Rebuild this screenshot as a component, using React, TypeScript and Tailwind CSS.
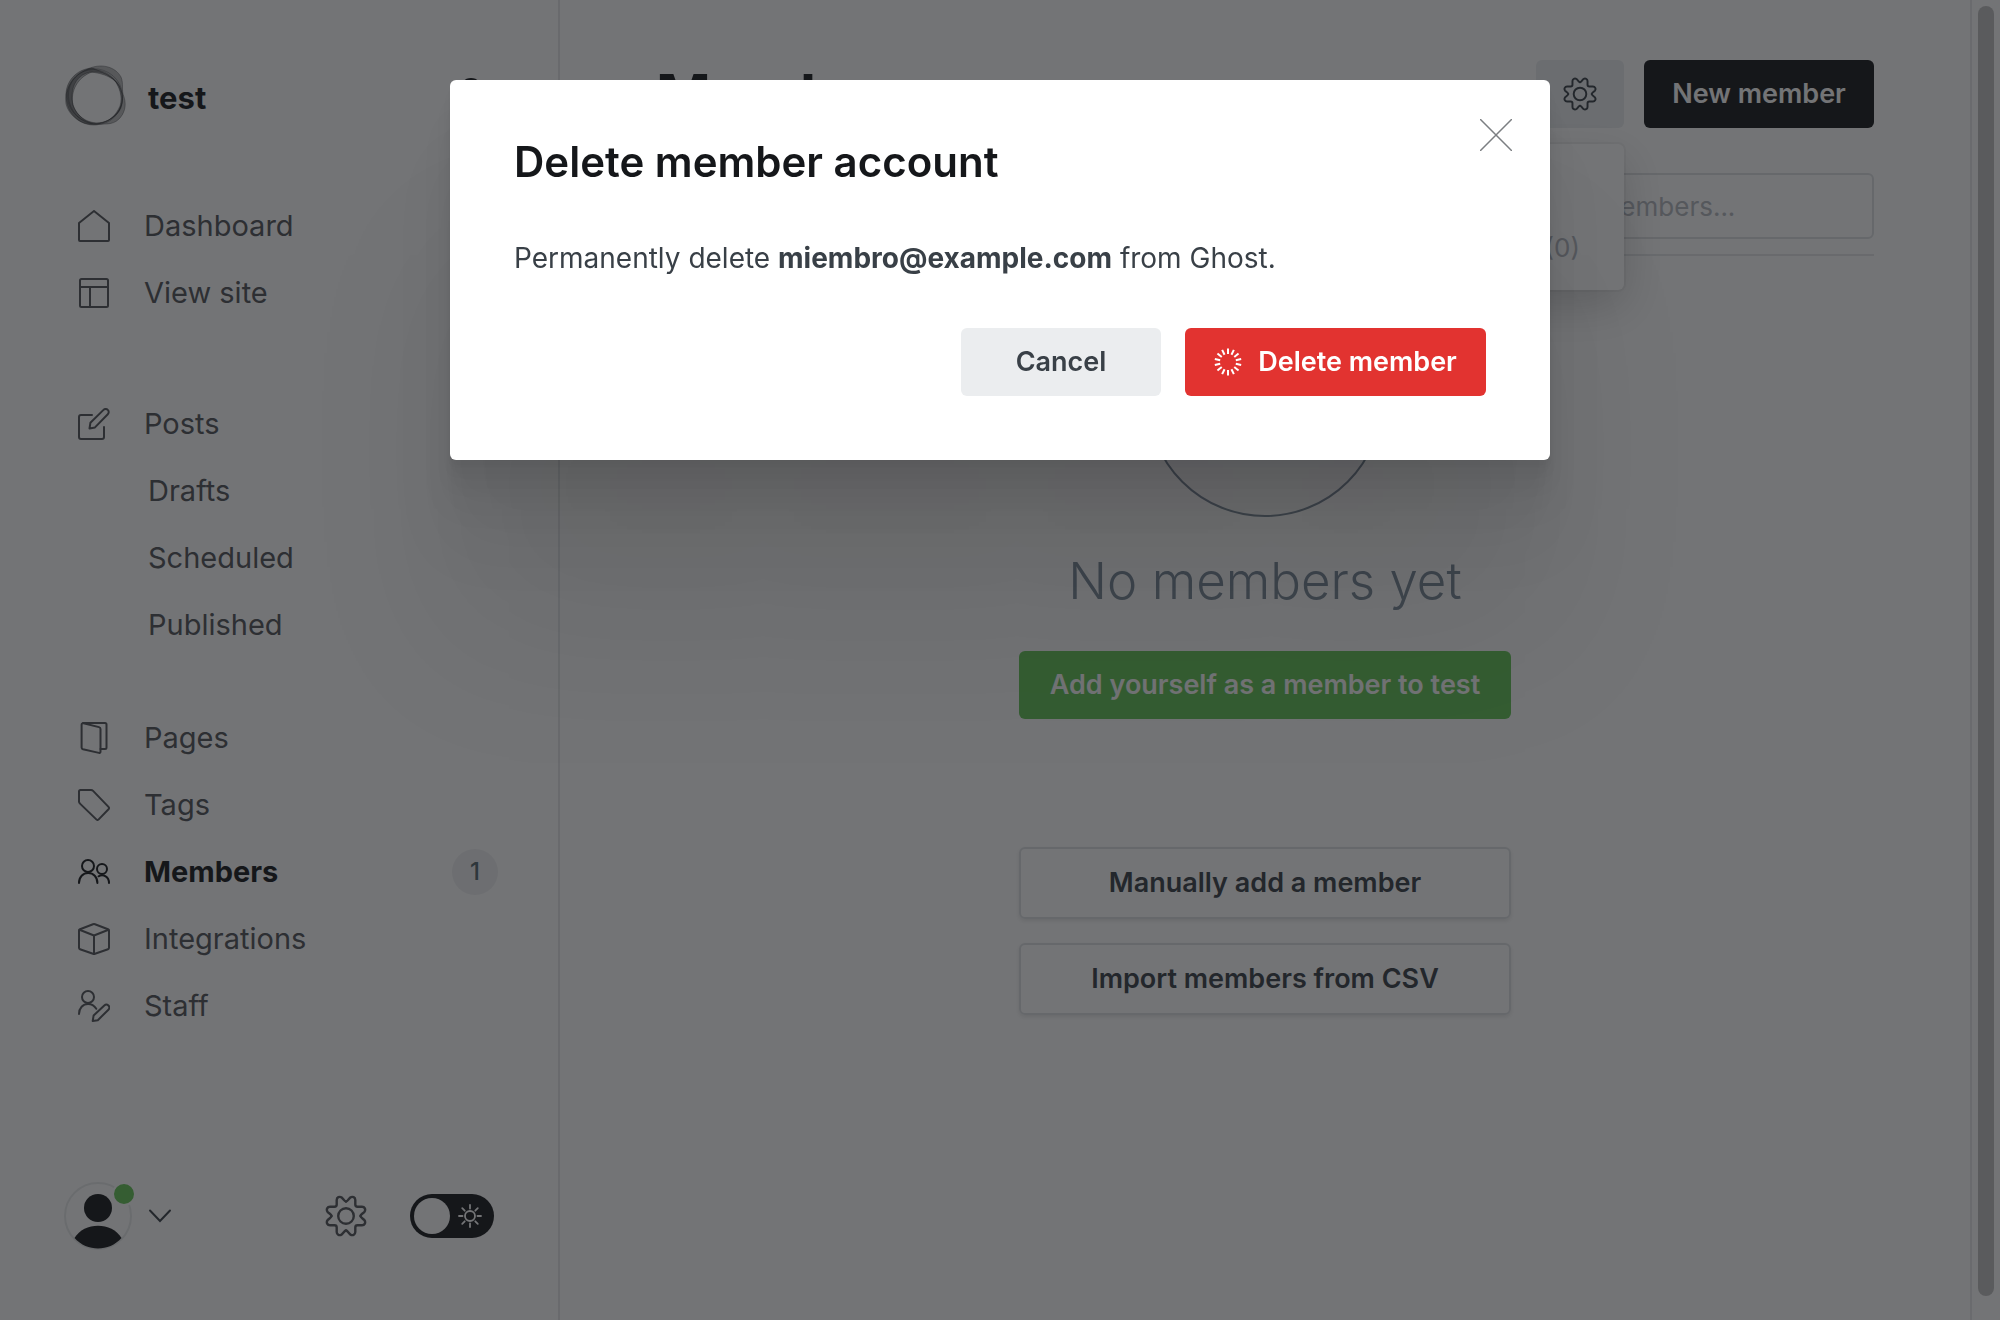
import React from "react";

type IconProps = { className?: string };

function Glyph({ children, className = "size-8" }: { children: React.ReactNode; className?: string }) {
  return (
    <svg
      viewBox="0 0 32 32"
      className={className}
      fill="none"
      stroke="currentColor"
      strokeWidth="2"
      strokeLinecap="round"
      strokeLinejoin="round"
      aria-hidden="true"
    >
      {children}
    </svg>
  );
}

const HomeIcon = () => (
  <Glyph>
    <path d="M1 13 16 1l15 12v17a1 1 0 0 1-1 1H2a1 1 0 0 1-1-1Z" />
  </Glyph>
);

const SiteIcon = () => (
  <Glyph>
    <rect x="2" y="2" width="28" height="28" rx="1.5" />
    <path d="M2 10h28M12 10v20" />
  </Glyph>
);

const PostsIcon = () => (
  <Glyph>
    <path d="M14 7H3a2 2 0 0 0-2 2v20a2 2 0 0 0 2 2h21a2 2 0 0 0 2-2V19" />
    <path d="m11.500 20.500.9-5.700L25.500 1.900a3 3 0 0 1 4.300 0 3 3 0 0 1 0 4.300L17 19.400Z" />
  </Glyph>
);

const PagesIcon = () => (
  <Glyph>
    <path d="M22.500 27H27a1.500 1.500 0 0 0 1.500-1.500v-23A1.500 1.500 0 0 0 27 1H5" />
    <path d="M5.500 1.200 21 5.100a2 2 0 0 1 1.500 1.900v22.600a1.300 1.300 0 0 1-1.600 1.300L5 27.300A2 2 0 0 1 3.600 25.400V2.700a1.500 1.500 0 0 1 1.900-1.500Z" />
  </Glyph>
);

const TagIcon = () => (
  <Glyph>
    <path d="M2.500 1H13a3 3 0 0 1 2.100.9l15.400 16a1.700 1.700 0 0 1 0 2.300L20.700 30.400a1.700 1.700 0 0 1-2.400 0L2 14.600a3 3 0 0 1-1-2.200V2.500A1.500 1.500 0 0 1 2.500 1Z" />
  </Glyph>
);

const MembersIcon = () => (
  <Glyph>
    <circle cx="10" cy="10" r="6" />
    <circle cx="24" cy="13" r="5" />
    <path d="M1 27c0-6 4-10 9.200-10s9.200 4 9.200 10M20.500 20.300c5-2.600 10.500.7 10.500 6.700" />
  </Glyph>
);

const BoxIcon = () => (
  <Glyph>
    <path d="M1 7.500a1.500 1.500 0 0 1 1-1.300L15 1.300a3 3 0 0 1 2 0l13 4.900a1.500 1.500 0 0 1 1 1.300v17.300a1.500 1.500 0 0 1-1 1.400l-13 4.600a3 3 0 0 1-2 0L2 26.200a1.500 1.500 0 0 1-1-1.400Z" />
    <path d="M1.500 6.800 16 12.500l14.500-5.700M16 12.500V31" />
  </Glyph>
);

const StaffIcon = () => (
  <Glyph>
    <circle cx="10" cy="7" r="6" />
    <path d="M1 24c0-6 4-10 9-10 3.500 0 6.500 2 8.300 4.800" />
    <path d="m14.700 31 .9-5.400L26.300 15.500a3 3 0 0 1 4.100 0 3 3 0 0 1 0 4.200L19.800 30.200Z" />
  </Glyph>
);

function GearIcon({ className = "size-10" }: IconProps) {
  const lobe =
    "M20 5.500C21.500 5.500 22.500 3 24.300 1.500 26.500 0 29.300 1.300 29.300 4V8.500C29.300 9.900 30.100 10.700 31.500 10.700H36C38.700 10.700 40 13.500 38.500 15.700 37 17.500 34.500 18.500 34.500 20";
  return (
    <svg
      viewBox="-1 -1 42 42"
      className={className}
      fill="none"
      stroke="currentColor"
      strokeWidth="2.400"
      strokeLinecap="round"
      aria-hidden="true"
    >
      {[0, 90, 180, 270].map((turn) => (
        <path key={turn} d={lobe} transform={`rotate(${turn} 20 20)`} />
      ))}
      <circle cx="20" cy="20" r="7.800" />
    </svg>
  );
}

function RingLogo() {
  return (
    <svg viewBox="0 0 64 64" className="size-16" fill="none" stroke="#15171a" aria-hidden="true">
      <g strokeWidth="0.800">
        <path
          fill="#15171a"
          fillOpacity=".3"
          fillRule="evenodd"
          strokeOpacity=".4"
          d="M24 5C36-1 51 2 57 13c3 7 0 13 3 20 3 9 0 17-5 22-7 7-15 4-23 6C18 62 5 52 2 40 0 25 9 11 24 5ZM28 8C14 13 6 27 9 41c4 11 14 19 24 19 12-1 19-9 23-18 3-10-1-19-5-25C45 11 38 7 28 8Z"
        />
        <path
          fill="#15171a"
          fillOpacity=".35"
          fillRule="evenodd"
          strokeOpacity=".4"
          d="M28 4C12 5 1 18 2 33c1 9 3 14 8 19 6 7 14 9 22 8 10-1 21-7 25-16 2-6 2-12 0-18C54 15 42 9 28 4ZM26 8c13 1 27 6 31 18 3 8 1 15-2 20-6 9-14 13-23 13-7-1-12-3-17-8C10 46 8 40 8 33 8 20 14 11 26 8Z"
        />
        <ellipse cx="31" cy="33" rx="26" ry="28" transform="rotate(-34 31 33)" strokeOpacity=".35" />
        <ellipse cx="31" cy="32" rx="28" ry="27" transform="rotate(30 31 32)" strokeOpacity=".3" />
      </g>
    </svg>
  );
}

function Spinner() {
  return (
    <svg viewBox="0 0 28 28" className="size-7" stroke="currentColor" strokeWidth="2" aria-hidden="true">
      {Array.from({ length: 14 }, (_, i) => (
        <path key={i} d="M14 .5v5.500" transform={`rotate(${(i * 360) / 14} 14 14)`} />
      ))}
    </svg>
  );
}

type NavItem = { label: string; icon?: React.ReactNode; active?: boolean; count?: number };

const groups: NavItem[][] = [
  [
    { label: "Dashboard", icon: <HomeIcon /> },
    { label: "View site", icon: <SiteIcon /> },
  ],
  [
    { label: "Posts", icon: <PostsIcon /> },
    { label: "Drafts" },
    { label: "Scheduled" },
    { label: "Published" },
  ],
  [
    { label: "Pages", icon: <PagesIcon /> },
    { label: "Tags", icon: <TagIcon /> },
    { label: "Members", icon: <MembersIcon />, active: true, count: 1 },
    { label: "Integrations", icon: <BoxIcon /> },
    { label: "Staff", icon: <StaffIcon /> },
  ],
];

function NavLink({ item }: { item: NavItem }) {
  return (
    <li>
      <a
        href="#"
        aria-current={item.active ? "page" : undefined}
        className={
          item.active
            ? "flex h-[67px] items-center pl-[14px] text-[29px] font-bold text-[#15171a]"
            : "flex h-[67px] items-center pl-[14px] text-[29px] text-[#515358]"
        }
      >
        {item.icon ? <span className="mr-[34px]">{item.icon}</span> : <span className="w-[70px]" />}
        <span className="flex-1">{item.label}</span>
        {item.count !== undefined && (
          <span className="flex size-[46px] items-center justify-center rounded-full bg-[#f0f1f2] text-[24px] font-medium text-[#54666d]">
            {item.count}
          </span>
        )}
      </a>
    </li>
  );
}

function Sidebar() {
  return (
    <aside className="flex w-[560px] shrink-0 flex-col border-r-2 border-[#e5e7e9] pr-[60px] pl-16">
      <header className="flex items-center pt-16">
        <RingLogo />
        <span className="ml-5 flex-1 pt-1 text-[31px] leading-[44px] font-bold text-[#15171a]">test</span>
        <button aria-label="Search" className="mr-2 mb-1 text-[#15171a]">
          <svg viewBox="0 0 32 32" className="size-8" fill="none" stroke="currentColor" strokeWidth="3" aria-hidden="true">
            <circle cx="13" cy="11.500" r="10" />
            <path d="m20 19 9 10" />
          </svg>
        </button>
      </header>
      <nav className="mt-16 flex flex-1 flex-col">
        {groups.map((group, i) => (
          <ul key={i} className={i === 1 ? "mt-16 mb-[46px]" : ""}>
            {group.map((item) => (
              <NavLink key={item.label} item={item} />
            ))}
          </ul>
        ))}
      </nav>
      <footer className="mb-[70px] flex items-center">
        <button aria-label="Account" className="flex items-center">
          <span className="relative">
            <svg viewBox="0 0 68 68" className="size-[68px]" aria-hidden="true">
              <circle cx="34" cy="34" r="33" fill="none" stroke="#e9ebec" strokeWidth="2" />
              <circle cx="34" cy="26" r="14" fill="#15171a" />
              <path d="M10.500 56C20 39.500 48 39.500 57.500 56 45 70 23 70 10.500 56Z" fill="#15171a" />
            </svg>
            <span className="absolute top-0 -right-1 size-6 rounded-full border-2 border-white bg-[#64c656]" />
          </span>
          <svg viewBox="0 0 24 14" className="ml-4 h-[14px] w-6 text-[#394047]" fill="none" stroke="currentColor" strokeWidth="2" strokeLinecap="round" aria-hidden="true">
            <path d="M2 1.500 12 12 22 1.500" />
          </svg>
        </button>
        <button aria-label="Settings" className="ml-auto text-[#515358]">
          <GearIcon className="size-[42px]" />
        </button>
        <label className="relative mr-1 ml-[43px] flex h-11 w-[84px] items-center justify-between rounded-full bg-[#15171a] px-1">
          <input type="checkbox" aria-label="Night mode" className="sr-only" />
          <span className="size-9 rounded-full bg-white" />
          <svg viewBox="0 0 24 24" className="mr-2 size-6 text-white" fill="none" stroke="currentColor" strokeWidth="1.800" strokeLinecap="round" aria-hidden="true">
            <circle cx="12" cy="12" r="5" />
            {[0, 45, 90, 135, 180, 225, 270, 315].map((turn) => (
              <path key={turn} d="M12 1v3.500" transform={`rotate(${turn} 12 12)`} />
            ))}
          </svg>
        </label>
      </footer>
    </aside>
  );
}

function Members() {
  return (
    <main className="flex min-w-0 flex-1 flex-col px-24 pt-[60px]">
      <div className="flex items-center">
        <h1 className="flex-1 pt-1 text-[59px] leading-[64px] font-bold text-[#15171a]">Members</h1>
        <div className="relative">
          <button aria-label="Members actions" className="flex h-[68px] w-[88px] items-center justify-center rounded-md bg-[#ebeef0] text-[#394047]">
            <GearIcon className="size-[34px]" />
          </button>
          <ul className="absolute top-[84px] right-0 z-10 rounded-md bg-white py-3 text-[26px] whitespace-nowrap text-[#b4b8bf] shadow-[0_0_0_2px_rgba(0,0,0,0.04),0_16px_44px_rgba(0,0,0,0.18)]">
            <li>
              <button className="h-[61px] w-full px-11 text-left">Import members</button>
            </li>
            <li>
              <button className="h-[61px] w-full px-11 text-left">Export all members (0)</button>
            </li>
          </ul>
        </div>
        <button className="ml-5 h-[68px] w-[230px] rounded-md bg-[#15171a] text-[27px] font-semibold text-white">New member</button>
      </div>
      <div className="mt-[45px] flex justify-end border-b-2 border-[#e5e7e9] pb-[15px]">
        <input
          type="search"
          aria-label="Search members"
          placeholder="Search members..."
          className="h-[66px] w-[440px] rounded-md border-2 border-[#dfe1e3] bg-white pl-[68px] text-[26px] placeholder:text-[#b4b8bf]"
        />
      </div>
      <section className="mx-auto mt-[25px] flex w-[492px] flex-col items-center">
        <div className="size-[236px] rounded-full border-2 border-[#7c8b9a] bg-[#f8f8fa]" />
        <h2 className="mt-7 text-[51px] leading-[72px] font-light whitespace-nowrap text-[#7c8b9a]">No members yet</h2>
        <button className="mt-[34px] h-[68px] w-full rounded-md bg-[#64c656] text-[27px] font-semibold text-white">
          Add yourself as a member to test
        </button>
        <button className="mt-32 h-[72px] w-full rounded-md border-2 border-[#dfe1e3] text-[27px] font-semibold text-[#394047] shadow-[0_2px_4px_rgba(0,0,0,0.1)]">
          Manually add a member
        </button>
        <button className="mt-6 h-[72px] w-full rounded-md border-2 border-[#dfe1e3] text-[27px] font-semibold text-[#394047] shadow-[0_2px_4px_rgba(0,0,0,0.1)]">
          Import members from CSV
        </button>
      </section>
    </main>
  );
}

function DeleteDialog() {
  return (
    <div className="fixed inset-0 z-20 flex items-start justify-center bg-[#15171a]/60 pt-20">
      <div
        role="dialog"
        aria-modal="true"
        aria-labelledby="dialog-title"
        className="relative w-[1100px] rounded-md bg-white p-16 pt-[54px] shadow-[0_6px_4px_rgba(0,0,0,0.02),0_13px_11px_rgba(0,0,0,0.028),0_25px_20px_rgba(0,0,0,0.035),0_45px_36px_rgba(0,0,0,0.042),0_84px_67px_rgba(0,0,0,0.05),0_180px_160px_rgba(0,0,0,0.08)]"
      >
        <h2 id="dialog-title" className="text-[42px] leading-[56px] font-semibold text-[#15171a]">
          Delete member account
        </h2>
        <p className="mt-12 text-[28px] leading-10 text-[#394047]">
          Permanently delete <strong className="font-bold">miembro@example.com</strong> from Ghost.
        </p>
        <div className="mt-[50px] flex justify-end gap-6">
          <button className="h-[68px] w-[200px] rounded-md bg-[#ebedef] text-[27px] font-semibold text-[#394047]">Cancel</button>
          <button className="flex h-[68px] w-[301px] items-center justify-center gap-4 rounded-md bg-[#e23330] text-[27px] font-semibold text-white">
            <Spinner />
            Delete member
          </button>
        </div>
        <button aria-label="Close" className="absolute top-[39px] right-[38px] text-[#7c7f82]">
          <svg viewBox="0 0 32 32" className="size-8" stroke="currentColor" strokeWidth="1.500" aria-hidden="true">
            <path d="M0 0 32 32M32 0 0 32" />
          </svg>
        </button>
      </div>
    </div>
  );
}

export default function App() {
  return (
    <div className="flex min-h-screen bg-white font-['Inter','Liberation_Sans',sans-serif]">
      <Sidebar />
      <Members />
      <div className="flex w-[30px] shrink-0 justify-center border-l-2 border-[#e8e9ea] pt-[6px] pb-6" aria-hidden="true">
        <div className="w-4 rounded-full bg-[#c1c1c1]" />
      </div>
      <DeleteDialog />
    </div>
  );
}
